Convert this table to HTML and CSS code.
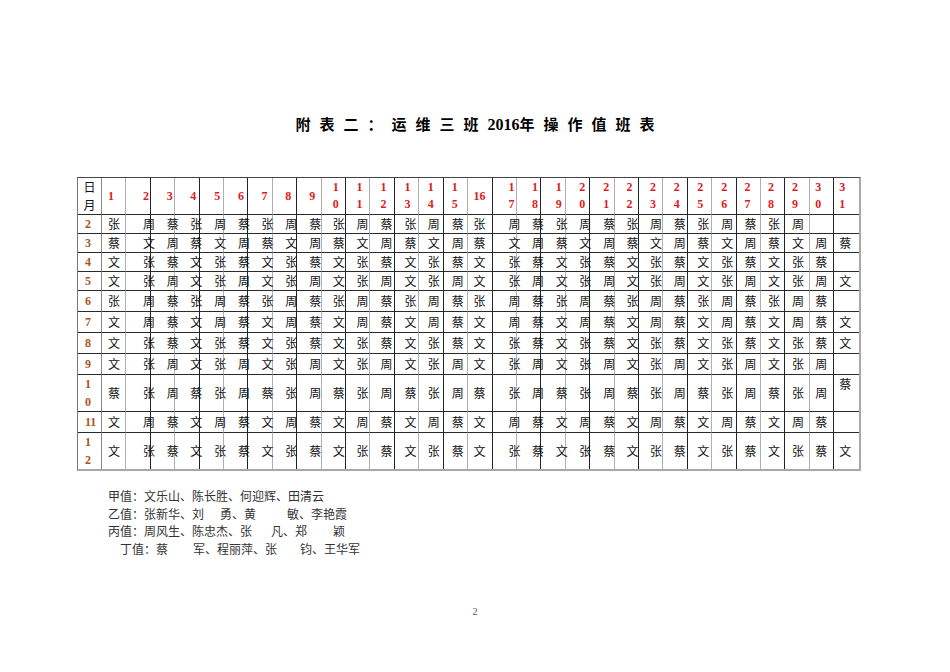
FILE: index.html
```html
<!DOCTYPE html>
<html lang="zh">
<head>
<meta charset="utf-8">
<title>运维三班2016年操作值班表</title>
<link rel="stylesheet" href="styles.css">
</head>
<body>
<div class="page">
  <h1 class="title">附 表 二 ： 运 维 三 班 <span class="num">2016</span>年 操 作 值 班 表</h1>
  <table class="duty">
    <colgroup><col class="c-lab"><col span="31"></colgroup>
    <tr class="hd">
      <td class="lab">日<br>月</td>
      <td>1</td><td>2</td><td>3</td><td>4</td><td>5</td><td>6</td><td>7</td><td>8</td><td>9</td>
      <td>1<br>0</td><td>1<br>1</td><td>1<br>2</td><td>1<br>3</td><td>1<br>4</td><td>1<br>5</td>
      <td>16</td>
      <td>1<br>7</td><td>1<br>8</td><td>1<br>9</td><td>2<br>0</td><td>2<br>1</td><td>2<br>2</td><td>2<br>3</td><td>2<br>4</td><td>2<br>5</td><td>2<br>6</td><td>2<br>7</td><td>2<br>8</td><td>2<br>9</td><td>3<br>0</td><td>3<br>1</td>
    </tr>
    <tr class="h18">
      <td class="m">2</td>
      <td>张</td><td>周</td><td>蔡</td><td>张</td><td>周</td><td>蔡</td><td>张</td><td>周</td><td>蔡</td><td>张</td><td>周</td><td>蔡</td><td>张</td><td>周</td><td>蔡</td>
      <td>张</td>
      <td>周</td><td>蔡</td><td>张</td><td>周</td><td>蔡</td><td>张</td><td>周</td><td>蔡</td><td>张</td><td>周</td><td>蔡</td><td>张</td><td>周</td><td></td><td></td>
    </tr>
    <tr class="h18">
      <td class="m">3</td>
      <td>蔡</td><td>文</td><td>周</td><td>蔡</td><td>文</td><td>周</td><td>蔡</td><td>文</td><td>周</td><td>蔡</td><td>文</td><td>周</td><td>蔡</td><td>文</td><td>周</td>
      <td>蔡</td>
      <td>文</td><td>周</td><td>蔡</td><td>文</td><td>周</td><td>蔡</td><td>文</td><td>周</td><td>蔡</td><td>文</td><td>周</td><td>蔡</td><td>文</td><td>周</td><td>蔡</td>
    </tr>
    <tr class="h18">
      <td class="m">4</td>
      <td>文</td><td>张</td><td>蔡</td><td>文</td><td>张</td><td>蔡</td><td>文</td><td>张</td><td>蔡</td><td>文</td><td>张</td><td>蔡</td><td>文</td><td>张</td><td>蔡</td>
      <td>文</td>
      <td>张</td><td>蔡</td><td>文</td><td>张</td><td>蔡</td><td>文</td><td>张</td><td>蔡</td><td>文</td><td>张</td><td>蔡</td><td>文</td><td>张</td><td>蔡</td><td></td>
    </tr>
    <tr class="h19">
      <td class="m">5</td>
      <td>文</td><td>张</td><td>周</td><td>文</td><td>张</td><td>周</td><td>文</td><td>张</td><td>周</td><td>文</td><td>张</td><td>周</td><td>文</td><td>张</td><td>周</td>
      <td>文</td>
      <td>张</td><td>周</td><td>文</td><td>张</td><td>周</td><td>文</td><td>张</td><td>周</td><td>文</td><td>张</td><td>周</td><td>文</td><td>张</td><td>周</td><td>文</td>
    </tr>
    <tr class="h22">
      <td class="m">6</td>
      <td>张</td><td>周</td><td>蔡</td><td>张</td><td>周</td><td>蔡</td><td>张</td><td>周</td><td>蔡</td><td>张</td><td>周</td><td>蔡</td><td>张</td><td>周</td><td>蔡</td>
      <td>张</td>
      <td>周</td><td>蔡</td><td>张</td><td>周</td><td>蔡</td><td>张</td><td>周</td><td>蔡</td><td>张</td><td>周</td><td>蔡</td><td>张</td><td>周</td><td>蔡</td><td></td>
    </tr>
    <tr class="h22">
      <td class="m">7</td>
      <td>文</td><td>周</td><td>蔡</td><td>文</td><td>周</td><td>蔡</td><td>文</td><td>周</td><td>蔡</td><td>文</td><td>周</td><td>蔡</td><td>文</td><td>周</td><td>蔡</td>
      <td>文</td>
      <td>周</td><td>蔡</td><td>文</td><td>周</td><td>蔡</td><td>文</td><td>周</td><td>蔡</td><td>文</td><td>周</td><td>蔡</td><td>文</td><td>周</td><td>蔡</td><td>文</td>
    </tr>
    <tr class="h22">
      <td class="m">8</td>
      <td>文</td><td>张</td><td>蔡</td><td>文</td><td>张</td><td>蔡</td><td>文</td><td>张</td><td>蔡</td><td>文</td><td>张</td><td>蔡</td><td>文</td><td>张</td><td>蔡</td>
      <td>文</td>
      <td>张</td><td>蔡</td><td>文</td><td>张</td><td>蔡</td><td>文</td><td>张</td><td>蔡</td><td>文</td><td>张</td><td>蔡</td><td>文</td><td>张</td><td>蔡</td><td>文</td>
    </tr>
    <tr class="h22">
      <td class="m">9</td>
      <td>文</td><td>张</td><td>周</td><td>文</td><td>张</td><td>周</td><td>文</td><td>张</td><td>周</td><td>文</td><td>张</td><td>周</td><td>文</td><td>张</td><td>周</td>
      <td>文</td>
      <td>张</td><td>周</td><td>文</td><td>张</td><td>周</td><td>文</td><td>张</td><td>周</td><td>文</td><td>张</td><td>周</td><td>文</td><td>张</td><td>周</td><td></td>
    </tr>
    <tr class="h36">
      <td class="m">1<br>0</td>
      <td>蔡</td><td>张</td><td>周</td><td>蔡</td><td>张</td><td>周</td><td>蔡</td><td>张</td><td>周</td><td>蔡</td><td>张</td><td>周</td><td>蔡</td><td>张</td><td>周</td>
      <td>蔡</td>
      <td>张</td><td>周</td><td>蔡</td><td>张</td><td>周</td><td>蔡</td><td>张</td><td>周</td><td>蔡</td><td>张</td><td>周</td><td>蔡</td><td>张</td><td>周</td><td class="top">蔡</td>
    </tr>
    <tr class="h22">
      <td class="m">11</td>
      <td>文</td><td>周</td><td>蔡</td><td>文</td><td>周</td><td>蔡</td><td>文</td><td>周</td><td>蔡</td><td>文</td><td>周</td><td>蔡</td><td>文</td><td>周</td><td>蔡</td>
      <td>文</td>
      <td>周</td><td>蔡</td><td>文</td><td>周</td><td>蔡</td><td>文</td><td>周</td><td>蔡</td><td>文</td><td>周</td><td>蔡</td><td>文</td><td>周</td><td>蔡</td><td></td>
    </tr>
    <tr class="h36">
      <td class="m">1<br>2</td>
      <td>文</td><td>张</td><td>蔡</td><td>文</td><td>张</td><td>蔡</td><td>文</td><td>张</td><td>蔡</td><td>文</td><td>张</td><td>蔡</td><td>文</td><td>张</td><td>蔡</td>
      <td>文</td>
      <td>张</td><td>蔡</td><td>文</td><td>张</td><td>蔡</td><td>文</td><td>张</td><td>蔡</td><td>文</td><td>张</td><td>蔡</td><td>文</td><td>张</td><td>蔡</td><td>文</td>
    </tr>
  </table>
  <div class="notes">
    <p>甲值：文乐山、陈长胜、何迎辉、田清云</p>
    <p>乙值：张新华、刘<span class="gap g16"></span>勇、黄<span class="gap g31"></span>敏、李艳霞</p>
    <p>丙值：周风生、陈忠杰、张<span class="gap g19"></span>凡、郑<span class="gap g26"></span>颖</p>
    <p class="indent">丁值：蔡<span class="gap g25"></span>军、程丽萍、张<span class="gap g23"></span>钧、王华军</p>
  </div>
  <div class="pageno">2</div>
</div>
</body>
</html>
```

FILE: styles.css
```css
html, body {
  margin: 0;
  padding: 0;
  background: #ffffff;
}

body {
  font-family: "Noto Sans CJK SC", "Noto Sans", sans-serif;
  color: #111;
}

.page {
  width: 950px;
  height: 672px;
  box-sizing: border-box;
  padding-top: 114px;
}

.title {
  margin: 0;
  height: 20px;
  line-height: 20px;
  font-size: 15px;
  font-weight: bold;
  text-align: center;
  color: #000;
  word-spacing: 5.6px;
}

.title .num {
  font-family: "Liberation Serif", serif;
  font-size: 16px;
}

/* ---------- duty table ---------- */
.duty {
  margin: 43px 0 0 77px;
  width: 784px;
  table-layout: fixed;
  border-collapse: separate;
  border-spacing: 0;
  border-top: 1px solid #444;
  border-left: 1px solid #777;
  border-right: 2px solid #a8a8a8;
  border-bottom: 2px solid #a8a8a8;
  font-size: 12px;
}

.c-lab {
  width: 24px;
}

.duty td {
  padding: 0;
  text-align: left;
  vertical-align: middle;
  line-height: 16px;
  white-space: nowrap;
  border-bottom: 1px solid #2a2a2a;
  border-right: 1px solid #b0b0b0;
  overflow: visible;
}

/* alternating gridline tone: even days end on a dark line */
.duty td:nth-child(2n+3) {
  border-right-color: #222;
}

.duty td:first-child {
  border-right-color: #8a8a8a;
}

.duty td:last-child {
  border-right: none;
}

.duty tr:last-child td {
  border-bottom: none;
}

/* header row */
.hd {
  height: 35px;
}

.hd td {
  font-family: "Liberation Serif", serif;
  font-weight: bold;
  color: #e01b1b;
  line-height: 17px;
}

.hd td.lab {
  font-family: "Noto Sans CJK SC", sans-serif;
  font-weight: normal;
  color: #111;
  text-align: center;
  line-height: 18px;
}

.h18 { height: 17px; }
.h19 { height: 18px; }
.h22 { height: 21px; }
.h36 { height: 35px; }

/* month label column */
.duty td.m {
  font-family: "Liberation Serif", serif;
  font-weight: bold;
  color: #a5561e;
  padding-left: 7px;
  line-height: 18px;
}

.duty td.top {
  vertical-align: top;
  padding-top: 1px;
}

/* per-column text offsets (text sits across the gridlines) */
.duty td:nth-child(2)  { padding-left: 6px; }
.duty td:nth-child(3)  { padding-left: 16.5px; }
.duty td:nth-child(4)  { padding-left: 16px; }
.duty td:nth-child(5)  { padding-left: 15px; }
.duty td:nth-child(6)  { padding-left: 14.5px; }
.duty td:nth-child(7)  { padding-left: 14px; }
.duty td:nth-child(8)  { padding-left: 13px; }
.duty td:nth-child(9)  { padding-left: 12.5px; }
.duty td:nth-child(10) { padding-left: 12px; }
.duty td:nth-child(11) { padding-left: 11px; }
.duty td:nth-child(12) { padding-left: 10.5px; }
.duty td:nth-child(13) { padding-left: 10px; }
.duty td:nth-child(14) { padding-left: 9.5px; }
.duty td:nth-child(15) { padding-left: 8.5px; }
.duty td:nth-child(16) { padding-left: 8px; }
.duty td:nth-child(17) { padding-left: 5.5px; }
.duty td:nth-child(18) { padding-left: 16px; }
.duty td:nth-child(19) { padding-left: 15px; }
.duty td:nth-child(20) { padding-left: 14.5px; }
.duty td:nth-child(21) { padding-left: 13.5px; }
.duty td:nth-child(22) { padding-left: 13px; }
.duty td:nth-child(23) { padding-left: 12px; }
.duty td:nth-child(24) { padding-left: 11px; }
.duty td:nth-child(25) { padding-left: 10.5px; }
.duty td:nth-child(26) { padding-left: 9.5px; }
.duty td:nth-child(27) { padding-left: 9px; }
.duty td:nth-child(28) { padding-left: 8px; }
.duty td:nth-child(29) { padding-left: 7px; }
.duty td:nth-child(30) { padding-left: 6.5px; }
.duty td:nth-child(31) { padding-left: 5.5px; }
.duty td:nth-child(32) { padding-left: 5px; }

/* ---------- notes ---------- */
.notes {
  margin: 16px 0 0 108px;
  font-size: 12px;
  line-height: 17.7px;
  color: #333;
}

.notes p {
  margin: 0;
  white-space: nowrap;
}

.notes p.indent {
  padding-left: 12px;
}

.gap {
  display: inline-block;
}

.g16 { width: 16px; }
.g19 { width: 19px; }
.g23 { width: 23px; }
.g25 { width: 25px; }
.g26 { width: 26px; }
.g31 { width: 31px; }

.pageno {
  margin-top: 48px;
  text-align: center;
  font-family: "Liberation Serif", serif;
  font-size: 10px;
  color: #555;
}
```
